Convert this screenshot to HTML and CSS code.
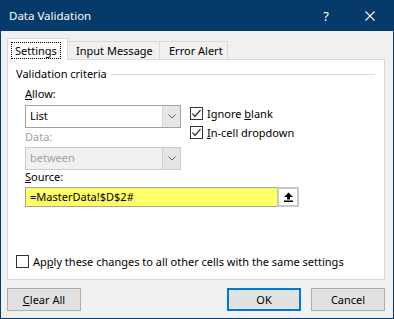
FILE: index.html
```html
<!DOCTYPE html>
<html lang="en">
<head>
    <meta charset="UTF-8">
    <title>Data Validation</title>
    <link rel="stylesheet" href="styles.css">
</head>
<body>
    <div class="window">
        <header class="titlebar">
            <span class="title">Data Validation</span>
            <span class="help">?</span>
            <svg class="close" width="10" height="10" viewBox="0 0 10 10">
                <path d="M0.5 0.5 L9.5 9.5 M9.5 0.5 L0.5 9.5" stroke="#fff" stroke-width="1.1" fill="none"/>
            </svg>
        </header>

        <div class="tabs">
            <div class="tab active"><span class="focus">Settings</span></div>
            <div class="tab">Input Message</div>
            <div class="tab">Error Alert</div>
        </div>

        <div class="panel">
            <div class="group-title">
                <span>Validation criteria</span>
                <span class="group-line"></span>
            </div>

            <div class="criteria">
                <div class="label"><u>A</u>llow:</div>
                <div class="allow-row">
                    <div class="select">
                        <span class="select-value">List</span>
                        <span class="select-arrow">
                            <svg width="8" height="5" viewBox="0 0 8 5"><path d="M0.5 0.5 L4 4 L7.5 0.5" stroke="#606060" fill="none"/></svg>
                        </span>
                    </div>
                    <div class="checks">
                        <label class="check">
                            <span class="box checked">
                                <svg width="11" height="11" viewBox="0 0 11 11"><path d="M1.5 5.5 L4 8.5 L9.5 2" stroke="#333" stroke-width="1.2" fill="none"/></svg>
                            </span>
                            <span>Ignore <u>b</u>lank</span>
                        </label>
                        <label class="check">
                            <span class="box checked">
                                <svg width="11" height="11" viewBox="0 0 11 11"><path d="M1.5 5.5 L4 8.5 L9.5 2" stroke="#333" stroke-width="1.2" fill="none"/></svg>
                            </span>
                            <span><u>I</u>n-cell dropdown</span>
                        </label>
                    </div>
                </div>

                <div class="label disabled label-data">Data:</div>
                <div class="select select-disabled">
                    <span class="select-value">between</span>
                    <span class="select-arrow">
                        <svg width="8" height="5" viewBox="0 0 8 5"><path d="M0.5 0.5 L4 4 L7.5 0.5" stroke="#606060" fill="none"/></svg>
                    </span>
                </div>

                <div class="label label-source"><u>S</u>ource:</div>
                <div class="source-row">
                    <div class="source-input">=MasterData!$D$2#</div>
                    <div class="source-btn">
                        <span class="source-icon">
                            <svg width="11" height="10" viewBox="0 0 11 10">
                                <path d="M5.5 0.5 L10 5 L7 5 L7 7.5 L4 7.5 L4 5 L1 5 Z" fill="#000"/>
                                <rect x="1" y="8.5" width="9" height="1.5" fill="#000"/>
                            </svg>
                        </span>
                    </div>
                </div>
            </div>

            <label class="check apply">
                <span class="box"></span>
                <span>Ap<u>p</u>ly these changes to all other cells with the same settings</span>
            </label>
        </div>

        <footer class="footer">
            <button class="btn"><u>C</u>lear All</button>
            <span class="spacer"></span>
            <button class="btn btn-default">OK</button>
            <button class="btn">Cancel</button>
        </footer>
    </div>
</body>
</html>
```

FILE: styles.css
```css
:root {
    --title-bg: #053a6a;
    --face: #f0f0f0;
    --tab-border: #d9d9d9;
    --field-border: #a3a3a3;
    --text: #000;
}

body {
    margin: 0;
    font-family: 'Noto Sans', sans-serif;
    font-size: 11px;
    color: var(--text);
}

u {
    text-decoration-thickness: 1px;
    text-underline-offset: 1px;
}

.window {
    width: 394px;
    height: 319px;
    box-sizing: border-box;
    border: 1px solid var(--title-bg);
    border-top: none;
    background: var(--face);
    display: flex;
    flex-direction: column;
}

/* Title bar */
.titlebar {
    height: 31px;
    background: var(--title-bg);
    color: #fff;
    display: flex;
    align-items: center;
    padding-left: 9px;
    margin: 0 -1px;
}

.title {
    flex: 1;
    font-size: 11.5px;
    line-height: 16px;
    padding-top: 1px;
}

.help {
    font-size: 13px;
    margin-right: 36px;
    padding-top: 1px;
}

.close {
    margin-right: 19px;
}

/* Tabs */
.tabs {
    display: flex;
    align-items: flex-end;
    height: 21px;
    margin: 7px 0 0 6px;
    position: relative;
    z-index: 1;
}

.tab {
    height: 18px;
    box-sizing: border-box;
    border: 1px solid var(--tab-border);
    border-bottom: none;
    padding: 0 8px;
    line-height: 17px;
    margin-left: -1px;
    white-space: nowrap;
}

.tab:nth-child(2) {
    width: 93px;
    padding: 0 0 0 8px;
}

.tab:nth-child(3) {
    width: 69px;
    padding: 0 0 0 9px;
}

.tab.active {
    height: 22px;
    margin: 0 0 -1px 0;
    width: 61px;
    padding: 3px 0 0 3px;
    background: #fff;
}

.focus {
    display: inline-block;
    border: 1px dotted #000;
    padding: 0 3px;
    line-height: 15px;
}

/* Panel */
.panel {
    height: 221px;
    box-sizing: border-box;
    margin: 0 8px 0 6px;
    background: #fff;
    border: 1px solid var(--tab-border);
    padding: 7px 8px 0 8px;
    display: flex;
    flex-direction: column;
}

.group-title {
    display: flex;
    align-items: center;
    gap: 4px;
    line-height: 14px;
}

.group-line {
    flex: 1;
    height: 1px;
    background: #dcdcdc;
    margin-right: 1px;
}

.criteria {
    padding-left: 9px;
}

.label {
    line-height: 14px;
    margin-top: 6px;
}

.disabled {
    color: #a0a0a0;
}

.label-data {
    margin-top: 2px;
}

.label-source {
    margin-top: 0;
}

.allow-row {
    display: flex;
    align-items: flex-start;
    gap: 9px;
    height: 23px;
    margin-top: 4px;
}

.select {
    width: 156px;
    height: 23px;
    box-sizing: border-box;
    border: 1px solid var(--field-border);
    display: flex;
    background: #fff;
}

.select-value {
    flex: 1;
    padding: 2px 0 0 4px;
    line-height: 16px;
}

.select-arrow {
    width: 17px;
    background: #e6e6e6;
    border-left: 1px solid #d6d6d6;
    display: flex;
    align-items: center;
    justify-content: center;
}

.select-disabled {
    margin-top: 3px;
    border-color: #cccccc;
    background: #f0f0f0;
    color: #a0a0a0;
}

.select-disabled .select-arrow {
    background: #e5e5e5;
    border-left-color: #cccccc;
}

.checks {
    display: flex;
    flex-direction: column;
    gap: 3px;
    margin-top: 0;
}

.check {
    display: flex;
    align-items: center;
    gap: 4px;
    height: 16px;
    white-space: nowrap;
}

.box {
    width: 13px;
    height: 13px;
    box-sizing: border-box;
    border: 1px solid #333;
    background: #fff;
    display: flex;
    align-items: center;
    justify-content: center;
}

/* Source */
.source-row {
    display: flex;
    margin-top: 3px;
    height: 20px;
}

.source-input {
    width: 252px;
    box-sizing: border-box;
    border: 1px solid var(--field-border);
    border-right: none;
    background: #ffff66;
    padding: 1px 0 0 4px;
    line-height: 16px;
}

.source-btn {
    width: 22px;
    box-sizing: border-box;
    background: #c8c8c8;
    padding: 2px;
    display: flex;
}

.source-icon {
    flex: 1;
    background: #fff;
    display: flex;
    align-items: center;
    justify-content: center;
}

.apply {
    margin-top: auto;
    margin-bottom: 10px;
}

/* Footer buttons */
.footer {
    display: flex;
    gap: 10px;
    margin: 8px 8px 0 6px;
}

.spacer {
    flex: 1;
}

.btn {
    width: 74px;
    height: 23px;
    box-sizing: border-box;
    background: #e1e1e1;
    border: 1px solid #adadad;
    font-family: inherit;
    font-size: 11px;
    color: #000;
    padding: 0;
}

.btn-default {
    border: 2px solid #0078d7;
}
```
